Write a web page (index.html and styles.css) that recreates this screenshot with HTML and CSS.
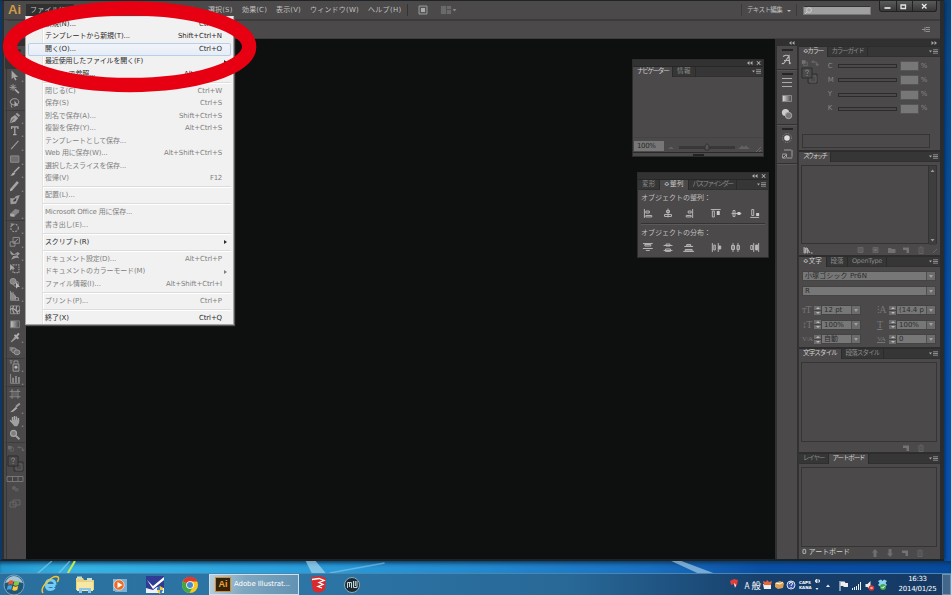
FILE: index.html
```html
<!DOCTYPE html>
<html lang="ja">
<head>
<meta charset="utf-8">
<title>Illustrator</title>
<link rel="stylesheet" href="styles.css">
</head>
<body>
<svg class="defs" width="0" height="0">
  <symbol id="flyout" viewBox="0 0 9 6"><path d="M0 1.500h3L1.500 3.500z" fill="#aaa"/><path d="M4 .8h5M4 2.500h5M4 4.200h5" stroke="#8c8c8c" stroke-width="1"/></symbol>
  <symbol id="closebtn" viewBox="0 0 14 6"><path d="M0 3l2.500-2v4zM3 3l2.500-2v4z" fill="#b0b0b0"/><path d="M10 1.200l3.200 3.600M13.200 1.200L10 4.800" stroke="#c0c0c0"/></symbol>
  <symbol id="arrows" viewBox="0 0 7 6"><path d="M1 3l2.500-2v4zM4 3l2.500-2v4z" fill="#a5a5a5"/></symbol>
  <symbol id="page" viewBox="0 0 8 8"><path d="M1 1.500h6V7H4.500V4H1z" fill="#747474"/></symbol>
  <symbol id="trash" viewBox="0 0 8 8"><path d="M1 2h6M3 1h2M2 3v4.500h4V3M4 3.400v3" stroke="#666" fill="none"/></symbol>
  <symbol id="swap" viewBox="0 0 20 8"><path d="M1 1h4v4H1z" fill="#777"/><path d="M3 3h4v4H3z" fill="none" stroke="#6b6b6b"/><path d="M14 1l-2 2h4q2 0 2 3M16.500 5L18 7l1.500-2" fill="none" stroke="#777"/></symbol>
  <symbol id="fillstroke" viewBox="0 0 18 18"><path d="M7 7h9v9H7z" fill="none" stroke="#303030"/><path d="M9 9h6v6H9z" fill="none" stroke="#606060"/><path d="M1 1h10v10H1z" fill="#4c4a4a" stroke="#2c2c2c"/><path d="M4.400 4.500q.2-1.500 1.700-1.500t1.500 1.300q0 .8-1.500 1.700v.8M6.100 8v1" stroke="#858585" fill="none"/></symbol>
</svg>

<main class="desktop">
<div class="window">
  <header class="menubar">
    <b class="logo">Ai</b>
    <nav>
      <span class="m on"><i data-w="39">ファイル(F)</i></span>
      <span class="m e34"><i data-w="24">編集(E)</i></span>
      <span class="m e62"><i data-w="52">オブジェクト(O)</i></span>
      <span class="m e38"><i data-w="24">書式(T)</i></span>
      <span class="m e34"><i data-w="24.500">選択(S)</i></span>
      <span class="m e34"><i data-w="25">効果(C)</i></span>
      <span class="m e34"><i data-w="25">表示(V)</i></span>
      <span class="m e58"><i data-w="49">ウィンドウ(W)</i></span>
      <span class="m e40"><i data-w="33.500">ヘルプ(H)</i></span>
    </nav>
    <svg class="bridge" width="42" height="12"><path d="M1 2h8v8H1z" fill="#555" stroke="#999"/><path d="M3 4h4v4H3z" fill="#aaa"/><path d="M22.500 1.500h11v9h-11z" fill="#505050"/><path d="M23 2h5v8h-5zM29 2h4v3h-4zM29 6h4v4h-4z" fill="#6a6a6a"/><path d="M34.500 5h4l-2 2.500z" fill="#888"/></svg>
    <span class="workspace"><i data-w="35">テキスト編集</i></span>
    <div class="search"><svg width="9" height="9"><circle cx="5" cy="4" r="2.400" fill="none" stroke="#ccc"/><path d="M3.200 5.800L1 8" stroke="#ccc"/></svg></div>
    <div class="winbtns">
      <svg width="58" height="11"><path d="M16.500 0v11M32.500 0v11" stroke="#222"/><path d="M4.500 7h6" stroke="#eee" stroke-width="1.600"/><path d="M21 4h4.500v3.500H21z" fill="none" stroke="#e5e5e5" stroke-width="1.300"/><path d="M42 3l4.500 4.500M46.500 3L42 7.500" stroke="#e5e5e5" stroke-width="1.400"/></svg>
    </div>
  </header>
  <div class="controlbar"><svg width="9" height="7"><path d="M0 3.500h3M3 1v5M4 1.500h4M4 3.500h4M4 5.500h4" stroke="#8e8e8e"/></svg></div>

  <div class="work">
    <aside class="tools">
      <div class="strip"></div><div class="grip"></div>
      <svg class="t sel" viewBox="0 0 20 14"><path d="M8 2v9l2-2 2 3 1-.6-1.500-3H14z" fill="#bbb"/></svg>
      <svg class="t" viewBox="0 0 20 14"><path d="M6.500 1.500v9l2-2 1.700 3.300 1.500-.7-1.600-3h3z" fill="#b6b6b6"/><path d="M17 12h1.500v1H17z" fill="#aaa"/></svg>
      <svg class="t" viewBox="0 0 20 14"><path d="M8 2v7M4.500 5.500h7M5.500 3l5 5M10.500 3l-5 5" stroke="#aaa"/><path d="M10 7.500l4 4" stroke="#bbb" stroke-width="1.800"/></svg>
      <svg class="t line" viewBox="0 0 20 14"><ellipse cx="9.500" cy="6" rx="4.300" ry="3.200" fill="none" stroke="#999" stroke-width="1.300"/><path d="M6.500 8q-1 2 .5 4" stroke="#aaa" fill="none"/><path d="M9.500 4.500v7l1.500-1.500h2.500z" fill="#bbb"/></svg>
      <svg class="t" viewBox="0 0 20 14"><path d="M4.500 12.500L6 7l4-3 3.300 3.200L10 11z" fill="#b5b5b5"/><path d="M10.500 3.200l1.700-1.500 3 3-1.500 1.500z" fill="#aaa"/><path d="M5 12l4-4.500" stroke="#555"/><path d="M17 12h1.500v1H17z" fill="#aaa"/></svg>
      <svg class="t" viewBox="0 0 20 14"><path d="M6.500 5V3H13v2M9.800 3v8M8 11h3.600" stroke="#bbb" fill="none" stroke-width="1.300"/><path d="M17 12h1.500v1H17z" fill="#aaa"/></svg>
      <svg class="t" viewBox="0 0 20 14"><path d="M6 11.500L13.500 3" stroke="#aaa" stroke-width="1.200"/><path d="M17 12h1.500v1H17z" fill="#aaa"/></svg>
      <svg class="t" viewBox="0 0 20 14"><path d="M5.500 4h8.500v6.500H5.500z" fill="#757575" stroke="#999"/><path d="M17 12h1.500v1H17z" fill="#aaa"/></svg>
      <svg class="t" viewBox="0 0 20 14"><path d="M14.500 2L9 7.500" stroke="#bbb" stroke-width="1.600"/><path d="M10.500 8Q9 12 5 10.500q2-.5 2.300-2T10.500 8" fill="#c0c0c0"/><path d="M17 12h1.500v1H17z" fill="#aaa"/></svg>
      <svg class="t" viewBox="0 0 20 14"><path d="M6.500 10.500L13 3" stroke="#b5b5b5" stroke-width="2.600"/><path d="M5 12.500l.4-3 2.400 1.800z" fill="#ddd"/><path d="M17 12h1.500v1H17z" fill="#aaa"/></svg>
      <svg class="t" viewBox="0 0 20 14"><path d="M5 5.500h4L11 3l4-1-1.500 4-2.500 5-5.500.5z" fill="#aaa"/><path d="M8 8l3.500-3.500-.5 3.500-2.500 1z" fill="#3a3a3a"/></svg>
      <svg class="t line" viewBox="0 0 20 14"><path d="M5 8l5-5 4.500 1-.5 2.500-5 4.500-4-.5z" fill="#919191"/><path d="M5 8l4 .5.500 2.500-4-.5z" fill="#c0c0c0"/><path d="M17 12h1.500v1H17z" fill="#aaa"/></svg>
      <svg class="t" viewBox="0 0 20 14"><circle cx="9.500" cy="7" r="3.900" fill="none" stroke="#aaa" stroke-width="1.200" stroke-dasharray="2 1.200"/><path d="M5 2.500h3v3z" fill="#aaa"/><path d="M17 12h1.500v1H17z" fill="#aaa"/></svg>
      <svg class="t" viewBox="0 0 20 14"><path d="M8 2.500h6.500v6H8zM5 7h5v4.500H5z" fill="none" stroke="#9a9a9a"/><path d="M9 8l4-4" stroke="#aaa"/><path d="M17 12h1.500v1H17z" fill="#aaa"/></svg>
      <svg class="t" viewBox="0 0 20 14"><path d="M5 2.500l4 4 4-2.500 2 2-2.500 2 2 2.500-3.500-.5-5 2 2-3.500L5.500 6z" fill="#aaa"/><path d="M7 8l5-1" stroke="#444"/><path d="M17 12h1.500v1H17z" fill="#aaa"/></svg>
      <svg class="t" viewBox="0 0 20 14"><path d="M8 3h6v8H8z" fill="none" stroke="#aaa" stroke-width="1.300" stroke-dasharray="1.500 1"/><path d="M5 2v7l2-2h3z" fill="#bbb"/></svg>
      <svg class="t" viewBox="0 0 20 14"><circle cx="8" cy="5.500" r="3" fill="#8d8d8d" stroke="#aaa"/><circle cx="11" cy="8" r="2.700" fill="none" stroke="#999"/><path d="M11 6v7l1.800-1.600H15z" fill="#ccc"/><path d="M17 12h1.500v1H17z" fill="#aaa"/></svg>
      <svg class="t" viewBox="0 0 20 14"><path d="M5.500 2v9.500h9M8 3v8M5.500 5l5 2v4M5.500 8l8 1v2.500" fill="none" stroke="#aaa"/><path d="M6 3l4 3v5H6z" fill="#999"/><path d="M17 12h1.500v1H17z" fill="#aaa"/></svg>
      <svg class="t" viewBox="0 0 20 14"><path d="M5.500 3h9v8h-9z" fill="none" stroke="#999"/><path d="M5 7q2.500-3 5 0t5 0M8.500 3q-2 4 1 8M12 3q-2 4 1 8" fill="none" stroke="#bbb" stroke-width="1.200"/></svg>
      <svg class="t" viewBox="0 0 20 14"><linearGradient id="g"><stop stop-color="#e0e0e0"/><stop offset="1" stop-color="#444"/></linearGradient><path d="M5.500 4h9v7h-9z" fill="url(#g)" stroke="#888"/></svg>
      <svg class="t" viewBox="0 0 20 14"><path d="M5.500 12l5-6 2 2-6 4.500z" fill="#aaa"/><path d="M9.500 5l4 4M11.500 6.500L14 3.500" stroke="#c0c0c0" stroke-width="2"/><path d="M17 12h1.500v1H17z" fill="#aaa"/></svg>
      <svg class="t line" viewBox="0 0 20 14"><path d="M4.500 3h4v4h-4z" fill="#888"/><circle cx="9" cy="6.500" r="2.500" fill="#666" stroke="#aaa"/><ellipse cx="12" cy="8.500" rx="3" ry="2.500" fill="#777" stroke="#aaa"/></svg>
      <svg class="t" viewBox="0 0 20 14"><path d="M8 5h6v7.500H8z" fill="#555" stroke="#aaa"/><path d="M9 4V2h4v2M4.500 2h3M5 4h2" stroke="#aaa" fill="none"/><circle cx="11" cy="8.500" r="1.500" fill="#ccc"/><path d="M17 12h1.500v1H17z" fill="#aaa"/></svg>
      <svg class="t line" viewBox="0 0 20 14"><path d="M5.500 2v9.500h9.500" fill="none" stroke="#999"/><path d="M8 11V6M11 11V4M14 11V5" stroke="#aaa" stroke-width="1.500"/><path d="M17 12h1.500v1H17z" fill="#aaa"/></svg>
      <svg class="t" viewBox="0 0 20 14"><path d="M7 2v10M13 2v10M4.500 4.500h11M4.500 10h11" stroke="#999"/><path d="M7.500 5h5v4.500h-5z" fill="#666"/></svg>
      <svg class="t" viewBox="0 0 20 14"><path d="M5 11.500L11 6l1.500 1.500L8 11z" fill="#c0c0c0"/><path d="M11 6l4-3.500" stroke="#aaa" stroke-width="2"/><path d="M17 12h1.500v1H17z" fill="#aaa"/></svg>
      <svg class="t" viewBox="0 0 20 14"><path d="M7.500 7V3M9.500 7V2M11.500 7V2.500M13.500 7V4M7.500 9L5 6.500" stroke="#bbb" stroke-width="1.500"/><path d="M7 6h7.300v3l-2 3.500h-3L7 9.500z" fill="#b0b0b0"/><path d="M17 12h1.500v1H17z" fill="#aaa"/></svg>
      <svg class="t line" viewBox="0 0 20 14"><circle cx="8.500" cy="5.500" r="3" fill="#888" stroke="#b5b5b5" stroke-width="1.300"/><path d="M11 8l3.500 3.500" stroke="#b5b5b5" stroke-width="2"/></svg>
      <svg class="minis"><use href="#swap" width="18" height="7"/></svg>
      <svg class="fs"><use href="#fillstroke" width="18" height="18"/></svg>
      <svg class="modes" viewBox="0 0 18 38"><path d="M1 1.500h16v5H1zM6.500 1.500v5M12 1.500v5" fill="#444" stroke="#777"/><circle cx="8" cy="13" r="2" fill="#626262"/><path d="M9 13h3.500v3.500H9z" fill="#5c5c5c"/><path d="M4 27h6v5H4zM7 25h7v5H7z" fill="#4a4a4a" stroke="#666"/></svg>
    </aside>

    <section class="canvas">
      <article class="float nav">
        <div class="fhead"><svg width="14" height="6"><use href="#closebtn"/></svg></div>
        <div class="tabs"><span class="tab on"><i data-w="31.500">ナビゲーター</i></span><span class="tab"><i data-w="14">情報</i></span><svg class="fly"><use href="#flyout"/></svg></div>
        <div class="navbody"></div>
        <div class="navrow"><span class="zoomv"><i data-w="18.500">100%</i></span><svg width="98" height="12"><path d="M4 8l3-2.500L10 8z" fill="#626262"/><path d="M15 6.500h56" stroke="#383838" stroke-width="3"/><path d="M41 5l2-2.500L45 5v4h-4z" fill="#555" stroke="#333"/><path d="M74 8l4-3.500 2 1.500 2-1.500 4 3.500z" fill="#626262"/><path d="M92 11l5-5M95 11l2-2" stroke="#696969"/></svg></div>
        <div class="navfoot"><b></b></div>
      </article>

      <article class="float align">
        <div class="fhead"><svg width="14" height="6"><use href="#closebtn"/></svg></div>
        <div class="tabs"><span class="tab"><i data-w="13.500">変形</i></span><span class="tab on"><i data-w="20">≎整列</i></span><span class="tab"><i data-w="40">パスファインダー</i></span><svg class="fly"><use href="#flyout"/></svg></div>
        <div class="alabel"><i data-w="70">オブジェクトの整列：</i></div>
        <svg class="aicons" viewBox="0 0 132 16"><g stroke="#b8b8b8" fill="none"><path d="M7.500 4v9M9 6h3.500v2H9zM9 10.500h6v1.500H9zM31.500 3.500v9M30 5.500h3v2h-3zM28 9.500h7v2h-7zM56.500 4v9M52 6h3v2h-3zM50 10.500h5v1.500h-5zM75 4.500h10M76.500 6v6h2V6zM96 8.500h10M97.500 5.500h2v6h-2zM116.500 4.500h2v6h-2zM115 12.500h9"/><path d="M81 6h3v4h-3zM102 7h3v3h-3zM121 8h3v3h-3z" fill="#ccc" stroke="none"/></g></svg>
        <hr>
        <div class="alabel"><i data-w="70">オブジェクトの分布：</i></div>
        <svg class="aicons" viewBox="0 0 132 16"><g stroke="#b8b8b8" fill="none"><path d="M6 4.500h10M6 9.500h10M8 5.500h6v1.500H8zM9 11.500h4M27 6.500h9M27 11.500h9M29.500 5h4v2h-4zM29 10h5v2.500h-5zM48 7.500h9M47 12.500h11M50.500 5.500h4v1.500h-4zM49 10.500h7V12h-7zM76.500 4v9M82.500 4v9M78 6h1.500v5H78zM97.500 4v9M102.500 4v9M96 6.500h3v4h-3zM101.500 6.500h2.500v4h-2.500zM118.500 4v9M123.500 4v9M115.500 6.500h2v4h-2z"/><path d="M83 7h2v3h-2zM120.500 6h2v5h-2z" fill="#bbb"/></g></svg>
      </article>
    </section>

    <aside class="dock">
      <div class="dhead"><svg width="7" height="6"><use href="#arrows"/></svg></div>
      <div class="dgroup g1"><b class="dots"></b><svg width="20" height="16"><path d="M5 11q1 1.500 2.500-.5L12 4l.5 7.500 1.500-.8M7 8.500h6M6 4.500q3-2 6-.8" stroke="#b8b8b8" stroke-width="1.200" fill="none"/></svg></div>
      <div class="dgroup g2"><b class="dots"></b><svg width="20" height="49"><path d="M5 2.500h10M5 6.500h10M5 10.500h10" stroke="#aaa" stroke-width="1.200"/><path d="M5.500 19.500h9v6h-9z" fill="url(#g)" stroke="#888"/><circle cx="8.500" cy="36.500" r="3.600" fill="#ccc"/><circle cx="11.500" cy="39.500" r="3.200" fill="#777" stroke="#aaa"/></svg></div>
      <div class="dgroup g3"><b class="dots"></b><svg width="20" height="32"><circle cx="10" cy="7" r="2.800" fill="#ddd"/><circle cx="10" cy="7" r="4.500" fill="none" stroke="#888" stroke-dasharray="1 1"/><path d="M7 19h8v8h-5M5.500 23h4v4h-4zM6 27l4-4" stroke="#a0a0a0" fill="none" stroke-dasharray="7 .7"/></svg></div>
    </aside>

    <aside class="panels">
      <div class="phead"><svg width="7" height="6" class="flip"><use href="#arrows"/></svg></div>
      <section class="panel color">
        <div class="tabs"><span class="tab on"><i data-w="20">≎カラー</i></span><span class="tab"><i data-w="32">カラーガイド</i></span><svg class="fly"><use href="#flyout"/></svg></div>
        <div class="colorbody">
          <div class="chips"><svg width="18" height="8"><use href="#swap"/></svg><svg width="18" height="18"><use href="#fillstroke"/></svg></div>
          <div class="sliders">
            <div><span>C</span><b></b><u></u><em>%</em></div><div><span>M</span><b></b><u></u><em>%</em></div><div><span>Y</span><b></b><u></u><em>%</em></div><div><span>K</span><b></b><u></u><em>%</em></div>
          </div>
        </div>
        <div class="spectrum"></div>
      </section>
      <section class="panel swatch">
        <div class="tabs"><span class="tab on"><i data-w="23">スウォッチ</i></span><svg class="fly"><use href="#flyout"/></svg></div>
        <div class="list"><div></div><svg width="7" height="79"><path d="M1.500 6h4l-2-2.500zM1.500 73h4l-2 2.500z" fill="#999"/></svg></div>
        <svg class="foot" viewBox="0 0 141 11"><path d="M5 3v6h1.500V4H8v5h1l-1-5 3 5" stroke="#aaa" fill="#888"/><path d="M12 9h1.500" stroke="#bbb"/><path d="M59 3.500h5v5h-5zM74 3.500h5v5h-5z" fill="#5c5c5c" stroke="#666"/><path d="M75.500 5h2v2h-2z" fill="#777"/><path d="M89 4h3l1 1h3.500v4H89z" fill="#717171"/><use href="#page" x="103" y="2" width="8" height="8"/><use href="#trash" x="118" y="2" width="8" height="8"/><path d="M134 9l4-4" stroke="#666"/></svg>
      </section>
      <section class="panel char">
        <div class="tabs"><span class="tab on"><i data-w="19">≎文字</i></span><span class="tab"><i data-w="13">段落</i></span><span class="tab"><i data-w="30">OpenType</i></span><svg class="fly"><use href="#flyout"/></svg></div>
        <div class="field wide"><i data-w="62">小塚ゴシック Pr6N</i><b></b></div>
        <div class="field wide second"><i>R</i><b></b></div>
        <div class="grid">
          <div class="cell"><small>тT</small><u></u><div class="field"><i>12 pt</i><b></b></div></div>
          <div class="cell"><small>⁝A</small><u></u><div class="field"><i>(14.4 p</i><b></b></div></div>
          <div class="cell"><small>↕T</small><u></u><div class="field"><i>100%</i><b></b></div></div>
          <div class="cell"><small class="ul">T</small><u></u><div class="field"><i>100%</i><b></b></div></div>
          <div class="cell"><small class="kern">V/A</small><u></u><div class="field"><i>自動</i><b></b></div></div>
          <div class="cell"><small class="kern ul">VA</small><u></u><div class="field"><i>0</i><b></b></div></div>
        </div>
      </section>
      <section class="panel style">
        <div class="tabs"><span class="tab on"><i data-w="34">文字スタイル</i></span><span class="tab"><i data-w="34">段落スタイル</i></span><svg class="fly"><use href="#flyout"/></svg></div>
        <div class="box"></div>
        <svg class="foot" viewBox="0 0 141 11"><use href="#page" x="103" y="2" width="8" height="8"/><use href="#trash" x="118" y="2" width="8" height="8"/></svg>
      </section>
      <section class="panel art">
        <div class="tabs"><span class="tab"><i data-w="21">レイヤー</i></span><span class="tab on"><i data-w="32">アートボード</i></span><svg class="fly"><use href="#flyout"/></svg></div>
        <div class="box"></div>
        <div class="status"><i data-w="48">0 アートボード</i><svg width="60" height="10"><path d="M2 4.500L5 1l3 3.500H6.500V9h-3V4.500zM17 5.500h1.500V1h3v4.500H23L20 9z" fill="#6f6f6f"/><use href="#page" x="31" y="1" width="8" height="8"/><use href="#trash" x="46" y="1" width="8" height="8"/></svg></div>
      </section>
    </aside>
  </div>
</div>

<svg class="wall" viewBox="0 0 952 12" preserveAspectRatio="none"><path d="M38 12L52 0M59 12L70 0" stroke="#8ad4ec" stroke-width="1.500" opacity=".6"/><path d="M68 12L75 0" stroke="#cbe84e" stroke-width="2"/><path d="M330 12L385 2" stroke="#9ed2ec" stroke-width="1.500" opacity=".5"/><path d="M306 0l6 12h14l-10-12zM672 0l26 12h16L682 0z" fill="#c8e8f6" opacity=".55"/></svg>

<footer class="taskbar">
  <div class="ico start"><svg width="26" height="22"><circle cx="13" cy="11" r="10" fill="#245577" stroke="#72a6c2"/><path d="M4 9q3-7 9-7t9 7q-9-3-18 0" fill="#a5c5d5"/><path d="M8 7q2-1.500 4.500-.3l-1 4Q9 9.500 7 11z" fill="#e85b25"/><path d="M13.500 7q2 1.500 5 0l-1 4q-3 1.500-5 0z" fill="#8cc63f"/><path d="M6.700 12q2-1.500 4.500-.3l-1 4Q8 14.500 5.700 16z" fill="#3fa4e8"/><path d="M12.200 12q2 1.500 5 0l-1 4q-3 1.500-5 0z" fill="#ffcb2f"/></svg></div>
  <div class="ico"><svg width="20" height="20"><path d="M15.500 10.500H6.200q.5 4 4.300 4 2.500 0 4-1.800M6 9.500q.8-4.500 4.700-4.300 4.300.2 4.500 4.500" fill="none" stroke="#75cdf4" stroke-width="2.800"/><path d="M3 18Q0 14 7 7t11-5q1.500 2-.8 5" fill="none" stroke="#f6c430" stroke-width="1.500"/></svg></div>
  <div class="ico"><svg width="20" height="20"><path d="M1 3h7l1 2h10v10H1z" fill="#ead27b"/><path d="M2 1.500h5V4H2zM12 3h5v3h-5z" fill="#cde0ca"/><path d="M2 7h16v9H2z" fill="#f6e7a6"/><path d="M4 18v-5h12v5h-3v-3H7v3z" fill="#8bc7e4"/></svg></div>
  <div class="ico"><svg width="18" height="18"><path d="M2 3h12v12H2z" fill="#8ab8d4"/><path d="M4 3h12v13H4z" fill="#7cb0d2"/><circle cx="8" cy="9" r="5.200" fill="#f06b21" stroke="#e8eef2" stroke-width=".7"/><path d="M6.500 6v6l5-3z" fill="#fff"/></svg></div>
  <div class="ico"><svg width="20" height="20"><path d="M1 1h18v17H1z" fill="#2f3c93"/><path d="M2 5l6 6L19 2v3L8 14z" fill="#fff"/><path d="M1 13l7 2 4-3 7 1v5H1z" fill="#eef2f8"/><path d="M12 13l3-2 3 2q0 4-3 6-3-2-3-6z" fill="#f5c934"/><path d="M12 13l3-2v4h-3zM15 15h3q-1 3-3 4z" fill="#3c78c8"/></svg></div>
  <div class="ico"><svg width="18" height="18"><circle cx="9" cy="9" r="8" fill="#f5c826"/><path d="M9 9L1.800 5.500A8 8 0 0 1 16.500 5.500H9z" fill="#df3a2b"/><path d="M1.800 5.500A8 8 0 0 0 8.500 17l3.500-6.500L9 9z" fill="#44a548"/><circle cx="9" cy="9" r="3.800" fill="#fff"/><circle cx="9" cy="9" r="3" fill="#438ccf"/></svg></div>
  <div class="active"><b>Ai</b><i data-w="56">Adobe Illustrat...</i></div>
  <div class="ico"><svg width="20" height="20"><path d="M2 2l9-1 6 2-1 12-6 3-6-2-1-6z" fill="#d92b2e"/><path d="M3 4.500l7-1 5 2-5 2 4 2-5 2 4 1.500" stroke="#fff" stroke-width="1.300" fill="none"/></svg></div>
  <div class="ico"><svg width="18" height="18" class="mu"><circle cx="9" cy="9" r="7.500" fill="#1d2b34" stroke="#8babb8"/><path d="M4.500 12V6.500h4V12M6.500 6.500V11M10.500 5v6.500h3.500V5M12.300 5v5" stroke="#c5d8df" fill="none"/></svg></div>

  <div class="tray">
    <svg width="72" height="16" class="ime"><path d="M2 4l4-2 4 1-1 5-2 2-1-3-3 1z" fill="#e33d36"/><path d="M6 6l2 2-1 3z" fill="#fff"/><text x="16.500" y="11.500" font-size="9.500" textLength="5" lengthAdjust="spacingAndGlyphs">A</text><text x="23.500" y="11.500" font-size="9.500">般</text><path d="M35 7h8v5h-7z" fill="#eee"/><path d="M35 4l3 1 1-2 2 2 3-1-1 4h-7z" fill="#e7673b"/><path d="M47 6l5-2 4 2-1 5-5 1-3-2z" fill="#d8a15a"/><path d="M48 6l4 1 3-2" stroke="#fff" fill="none"/><circle cx="63" cy="8" r="4" fill="#3554a5" stroke="#dde"/><path d="M61.500 7q0-2 1.500-2t1.500 1.800q0 .7-1.500 1.700v.5M63 10v1" stroke="#fff" fill="none"/></svg>
    <div class="caps">CAPS<br>KANA</div>
    <svg width="72" height="16"><path d="M3.500 3h4v2h-4zM4.500 2v4" stroke="#ddd" fill="none"/><path d="M3.500 11h3L5 13zM14 10h4l-2-2.500z" fill="#eee"/><path d="M28 4v10" stroke="#eee"/><path d="M28.500 4.500h4l1 1.500H36v4h-4l-1-1h-2.500z" fill="#eee"/><path d="M40.500 13v-2M42.500 13v-3M44.500 13V9M46.500 13V7M48.500 13V5" stroke="#eee"/><path d="M53.500 7h2l3-3v9l-3-3h-2z" fill="#eee"/><circle cx="59.500" cy="11" r="2.800" fill="#dd3730"/><path d="M58.500 10l2 2M60.500 10l-2 2" stroke="#fff" stroke-width=".7"/></svg>
    <svg width="11" height="16" class="drop"><path d="M1 4l3-1.500L5.500 4 7 2.500 10 4 8.500 6 10 8l-3 2-1.500-1.500L4 10 1 8l1.500-2z" fill="#8fd2f4"/><circle cx="6" cy="10" r="3" fill="#43a752"/><path d="M4.500 10l1.200 1.200L7.500 9" stroke="#fff" fill="none"/></svg>
    <div class="clock"><i data-w="18.500">16:33</i><i data-w="38">2014/01/25</i></div>
    <div class="peek"></div>
  </div>
</footer>
</main>

<div class="menu">
  <p><i data-w="31">新規(N)...</i><s data-w="23">Ctrl+N</s></p>
  <p><i data-w="85">テンプレートから新規(T)...</i><s data-w="44">Shift+Ctrl+N</s></p>
  <p class="hot"><i data-w="31">開く(O)...</i><s data-w="23">Ctrl+O</s></p>
  <p class="more"><i data-w="98">最近使用したファイルを開く(F)</i></p>
  <p><i data-w="50">Bridge で参照...</i><s data-w="38">Alt+Ctrl+O</s></p>
  <hr>
  <p class="off"><i data-w="30.500">閉じる(C)</i><s data-w="24.500">Ctrl+W</s></p>
  <p class="off"><i data-w="24">保存(S)</i><s data-w="22">Ctrl+S</s></p>
  <p class="off"><i data-w="51">別名で保存(A)...</i><s data-w="43">Shift+Ctrl+S</s></p>
  <p class="off"><i data-w="51">複製を保存(Y)...</i><s data-w="37">Alt+Ctrl+S</s></p>
  <p class="off"><i data-w="81">テンプレートとして保存...</i></p>
  <p class="off"><i data-w="62.500">Web 用に保存(W)...</i><s data-w="58">Alt+Shift+Ctrl+S</s></p>
  <p class="off"><i data-w="81">選択したスライスを保存...</i></p>
  <p class="off"><i data-w="24">復帰(V)</i><s data-w="12">F12</s></p>
  <hr>
  <p class="off"><i data-w="30">配置(L)...</i></p>
  <hr>
  <p class="off"><i data-w="87">Microsoft Office 用に保存...</i></p>
  <p class="off"><i data-w="43">書き出し(E)...</i></p>
  <hr>
  <p class="more"><i data-w="44">スクリプト(R)</i></p>
  <hr>
  <p class="off"><i data-w="71">ドキュメント設定(D)...</i><s data-w="37">Alt+Ctrl+P</s></p>
  <p class="off more"><i data-w="100">ドキュメントのカラーモード(M)</i></p>
  <p class="off"><i data-w="56">ファイル情報(I)...</i><s data-w="56">Alt+Shift+Ctrl+I</s></p>
  <hr>
  <p class="off"><i data-w="43">プリント(P)...</i><s data-w="22">Ctrl+P</s></p>
  <hr>
  <p><i data-w="24">終了(X)</i><s data-w="23">Ctrl+Q</s></p>
</div>

<svg class="ring" width="262" height="96"><ellipse cx="129.600" cy="46.700" rx="119.600" ry="38.300" fill="none" stroke="#e60012" stroke-width="14.300"/></svg>
<script src="fit.js"></script>
</body>
</html>
```
FILE: styles.css
```css
* { box-sizing: border-box; }
body { margin: 0; width: 952px; height: 595px; overflow: hidden; position: relative;
  font: 7px/1 "DejaVu Sans", "Noto Sans CJK JP", sans-serif; color: #c0c0c0; }
i, s, em, u { font-style: normal; text-decoration: none; white-space: nowrap; }
i, s { display: inline-block; }
p, hr { margin: 0; border: 0; }
svg { display: block; flex: none; }
.defs { position: absolute; }

.desktop { display: flex; flex-direction: column; width: 952px; height: 595px;
  background: linear-gradient(#0c4378 0, #0a4a8c 60px, #0750a9 300px, #0953ae 560px, #0a54a8 100%); border-right: 1px solid #c9d8e8; }
.window { width: 944px; height: 561px; padding-left: 5px; padding-right: 4px; background: #4b4949;
  border-left: 2px solid #0b3866; border-top: 1px solid #202426; border-bottom: 2px solid #1c2226;
  box-shadow: inset 2px 0 #2c2e30, inset -4px 0 #2a2c2e, 0 0 5px #001a3c; display: flex; flex-direction: column; }

.menubar { height: 19px; display: flex; align-items: center; flex: none; background: #4b4949; border-bottom: 1px solid #3b3b3b; margin-left: -3px; }
.logo { width: 22px; padding-left: 4px; font: bold 13px/18px "Liberation Sans"; color: #d09a44; }
nav { display: flex; height: 17px; align-items: center; }
.m { width: 34px; line-height: 12px; }
.m.on { width: 48px; padding-left: 4px; background: #303030; }
.m.e62 { width: 62px; } .m.e38 { width: 38px; } .m.e58 { width: 58px; } .m.e40 { width: 40px; border-right: 1px solid #333; }
.bridge { margin-left: 10px; }
.workspace { margin-left: 281px; width: 56px; border: solid #3a3a3a; border-width: 0 1px; padding-left: 5px; line-height: 12px; font-size: 6.500px; }
.workspace::after { content: ""; display: inline-block; border: 2px solid transparent; border-top-color: #bbb; border-bottom: 0; margin-left: 5px; }
.search { margin-left: 6px; width: 68px; height: 9px; background: #a0a0a0; border: 1px solid #777; border-top-color: #333; }
.search svg { margin-top: -1px; }
.winbtns { align-self: flex-start; margin-left: 8px; margin-right: -1px; width: 58px; height: 11px; background: linear-gradient(#5a5a5a, #383838); border: 1px solid #222; border-top: 0; border-radius: 0 0 3px 3px; }
.controlbar { height: 19px; flex: none; border: solid #3c3c3c; border-width: 1px 0; display: flex; align-items: center; justify-content: flex-end; padding-right: 9px; }

.work { flex: 1; display: flex; min-height: 0; }
.tools { width: 19px; margin-left: -1px; background: #4b4949; flex: none; border-left: 1px solid #383838; }
.strip { height: 7px; background: #303030; }
.grip { height: 3px; margin: 3px 4px 3px; background: #333; }
.t { width: 20px; height: 13.660px; margin-left: -2px; opacity: .85; }
.t.sel { background: #333; }
.t.line { height: 14.700px; border-bottom: 1px solid #3c3c3c; }
.minis { width: 18px; height: 7px; margin-top: 2px; opacity: .8; }
.fs { width: 18px; height: 18px; margin-top: 3px; }
.modes { width: 18px; height: 38px; margin-top: 2px; margin-left: -1px; }
.canvas { flex: 1; background: #0e100f; margin-left: 1px; position: relative; }

.float { position: absolute; width: 132px; background: #4b4949; border: 1px solid #2d2d2d; }
.float.nav { left: 606px; top: 20px; height: 98px; }
.float.align { left: 611px; top: 133px; height: 86px; }
.fhead { height: 7px; background: #323232; display: flex; justify-content: flex-end; align-items: center; padding-right: 2px; border-bottom: 1px solid #272727; }
.tabs { height: 10px; background: #363636; display: flex; font-size: 6.500px; line-height: 9px; color: #8b8b8b; border-bottom: 1px solid #303030; }
.tab { padding: 0 3.500px 0 4px; border-right: 1px solid #2b2b2b; height: 10px; }
.tab.on { background: #4b4949; color: #d0d0d0; }
.fly { width: 9px; height: 6px; margin: 2px 2px 0 auto; }
.navbody { height: 61px; border-bottom: 1px solid #454343; }
.navrow { display: flex; height: 14px; padding: 3px 1px 1px; }
.zoomv { width: 31px; height: 10px; background: #777; color: #292929; padding-left: 3px; line-height: 11px; }
.navfoot { border-top: 1px solid #2a2a2a; height: 4px; }
.navfoot b { display: block; width: 11px; height: 2px; margin: 1px auto; background: #222; }
.alabel { height: 15px; padding: 3px 3px 0; line-height: 10px; }
.aicons { width: 130px; height: 16px; margin-left: -1px; }
.align hr { height: 2px; margin: 2px 3px 0; border-top: 1px solid #333; border-bottom: 1px solid #5a5a5a; }
.align hr + .alabel { height: 14px; }

.dock { width: 23px; border-left: 2px solid #303030; border-right: 1px solid #303030; background: #4b4949; flex: none; }
.dhead, .phead { height: 7px; background: #303030; display: flex; justify-content: flex-end; align-items: center; padding-right: 2px; }
.flip { transform: scaleX(-1); }
.dgroup { border-bottom: 1px solid #313131; box-shadow: 0 1px #565656; padding-top: 3px; }
.dots { display: block; width: 11px; height: 2px; margin: 0 auto 1px; background: #262626; }
.g1 { height: 24px; } .g2 { height: 55px; } .g3 { height: 39px; }

.panels { width: 142px; flex: none; background: #4b4949; border-left: 1px solid #333; }
.panel { border-bottom: 1px solid #2e2e2e; }
.panel .tabs { border-top: 1px solid #2d2d2d; height: 11px; }
.color { height: 105px; } .swatch { height: 105px; } .char { height: 92px; } .style { height: 105px; } .art { height: 105px; border: 0; }
.colorbody { display: flex; height: 74px; padding: 2px 2px 0 2px; }
.chips { width: 26px; }
.sliders { width: 112px; color: #888; }
.sliders div { height: 14.250px; display: flex; align-items: center; }
.sliders span { width: 11px; padding-left: 1px; }
.sliders b { width: 59px; height: 4px; border: 1px solid #2c2c2c; margin-right: 3px; background: #4b4949; }
.sliders u { width: 19px; height: 10px; background: #777; border: 1px solid #555; }
.sliders em { padding-left: 2px; }
.spectrum { width: 128px; height: 14px; border: 1px solid #353535; margin: 3px 0 0 3px; }
.list { margin: 3px 0 0 2px; display: flex; width: 136px; height: 79px; border: 1px solid #333; }
.list div { flex: 1; border-right: 1px solid #333; }
.list svg { background: #3e3e3e; }
.foot { width: 141px; height: 11px; }
.field { display: flex; height: 10px; background: #777; border: 1px solid #444; color: #2c2c2c; line-height: 9px; padding-left: 2px; }
.field b { margin-left: auto; width: 9px; border-left: 1px solid #505050; background: #6c6c6c; display: flex; justify-content: center; align-items: center; }
.field b::after { content: ""; border: 2px solid transparent; border-top: 3px solid #a0a0a0; border-bottom: 0; }
.wide { margin: 4px 0 0 3px; width: 134px; }
.wide.second { margin-top: 5px; }
.grid { display: grid; grid-template-columns: 75px 60px; grid-auto-rows: 14.500px; margin: 7px 0 0 3px; align-items: center; }
.cell { display: flex; align-items: center; }
.cell .field { width: 40px; }
.cell small { font: 10px/10px "Liberation Serif"; width: 12px; flex: none; color: #777; letter-spacing: -.8px; white-space: nowrap; }
.cell .kern { font-size: 7px; letter-spacing: -.5px; }
.cell .ul { text-decoration: underline; }
.cell u { width: 7px; height: 9px; background: linear-gradient(#6c6c6c 4px, #444 4px 5px, #6c6c6c 5px); display: flex; flex-direction: column; align-items: center; justify-content: space-between; padding: 1px 0; }
.cell u::before, .cell u::after { content: ""; border: 2px solid transparent; border-bottom-color: #bbb; border-top: 0; }
.cell u::after { border-top: 2px solid #bbb; border-bottom: 0; }
.box { margin: 3px 0 0 2px; width: 136px; height: 80px; border: 1px solid #353535; }
.status { display: flex; align-items: center; height: 11px; padding-left: 3px; color: #d0d0d0; }
.status svg { margin-left: 20px; }

.wall { width: 951px; height: 12px; background: linear-gradient(90deg, #2497ce, #35b3e4 8%, #2b9fdb 30%, #2389cf 50%, #1a70c0 68%, #0b4fa5 80%, #084a9e); box-shadow: inset 0 4px 4px -2px #0a3558; }
.taskbar { width: 951px; height: 22px; display: flex; background: linear-gradient(90deg, #2a6f9d, #2c76a6 30%, #286897 60%, #173f6c 80%, #143963); border-top: 1px solid #4e86ab; color: #fff; }
.ico { width: 35px; display: flex; align-items: center; justify-content: center; flex: none; }
.start { width: 32px; padding-right: 4px; }
.mu { margin-right: 3px; }
.active { width: 90px; margin: 0 2px; background: linear-gradient(100deg, #b9cfdd, #7fa6bf 40%, #6292b2); border: 1px solid #cfe0ea; display: flex; align-items: center; gap: 3px; padding-left: 5px; flex: none; }
.active b { width: 16px; height: 15px; background: #35240c; border: 1px solid #d08e31; color: #f3a43a; font: bold 9px/13px "Liberation Sans"; text-align: center; }
.tray { margin-left: auto; display: flex; align-items: center; }
.ime { fill: #fff; margin-right: -1px; }
.caps { font: bold 4px/5px "DejaVu Sans"; width: 13px; }
.drop { margin-left: -7px; margin-right: 1px; }
.clock { width: 49px; margin-left: 4px; display: flex; flex-direction: column; align-items: center; gap: 3px; }
.peek { width: 9px; height: 21px; background: #42678b; border: 1px solid #7292ae; }

.menu { position: absolute; left: 25px; top: 16px; width: 209px; height: 309px; padding: 1px 2px 0; border: 1px solid #a5a5a5; border-top-color: #ddd;
  background: linear-gradient(90deg, #f0f0f0 16px, #e2e2e2 16px 17px, #fff 17px 18px, #f1f1f1 18px); color: #2c2c2c; box-shadow: 1px 1px 1px #555; }
.menu p { height: 12.500px; display: flex; align-items: center; justify-content: space-between; padding: 0 9px 0 17px; }
.menu hr { height: 4.500px; margin-left: 15px; background: linear-gradient(transparent 1px, #dcdcdc 1px 2px, #fff 2px 3px, transparent 3px); }
.menu .off { color: #808080; }
.menu .hot { background: linear-gradient(#f2f5fa, #e5ecf6); box-shadow: inset 0 0 0 1px #b8cfea; border-radius: 2px; }
.menu .more::after { content: ""; border: 2px solid transparent; border-left: 3px solid currentColor; border-right: 0; margin-right: -5px; }
.ring { position: absolute; left: 0; top: 0; }
```
FILE: fit.js
```js
// Tracks each label so that it fills its assigned width in pixels.
document.querySelectorAll('[data-w]').forEach(function (el) {
  var n = Array.from(el.textContent).length;
  var extra = parseFloat(el.dataset.w) - el.getBoundingClientRect().width;
  el.style.letterSpacing = (extra / n) + 'px';
});
```
